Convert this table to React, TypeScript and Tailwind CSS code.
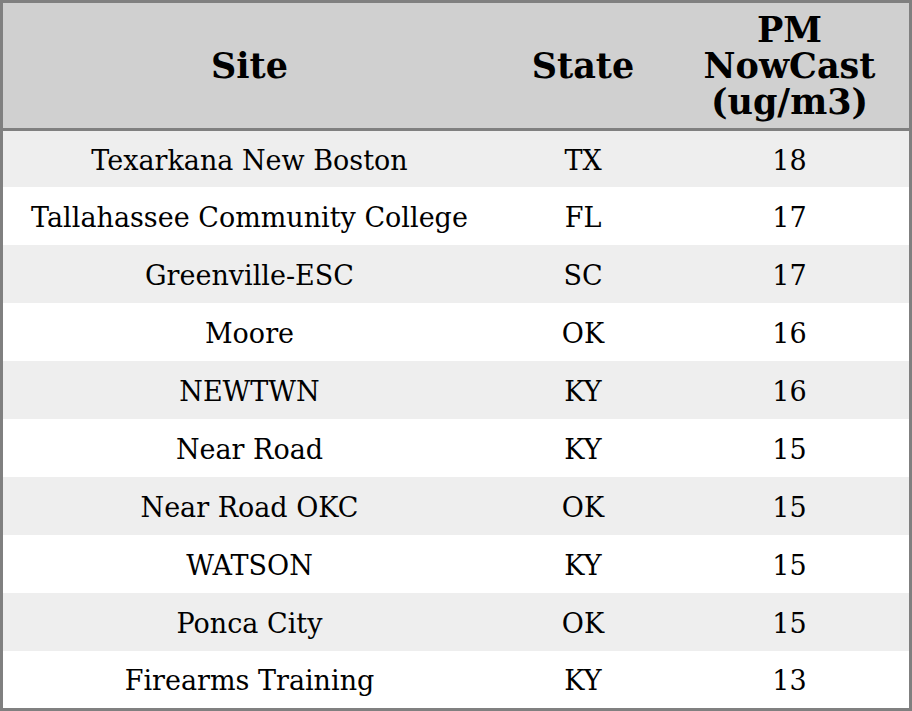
import React from "react";

const rows = [
  { site: "Texarkana New Boston", state: "TX", pm: 18 },
  { site: "Tallahassee Community College", state: "FL", pm: 17 },
  { site: "Greenville-ESC", state: "SC", pm: 17 },
  { site: "Moore", state: "OK", pm: 16 },
  { site: "NEWTWN", state: "KY", pm: 16 },
  { site: "Near Road", state: "KY", pm: 15 },
  { site: "Near Road OKC", state: "OK", pm: 15 },
  { site: "WATSON", state: "KY", pm: 15 },
  { site: "Ponca City", state: "OK", pm: 15 },
  { site: "Firearms Training", state: "KY", pm: 13 },
];

const heights = ["h-[56px]", "h-[58px]", "h-[58px]", "h-[58px]", "h-[58px]", "h-[58px]", "h-[58px]", "h-[58px]", "h-[58px]", "h-[57px]"];

export default function App() {
  return (
    <div className="w-[912px] h-[711px] bg-white font-['DejaVu_Serif',serif] text-black">
      <div className="border-[3px] border-[#808080] flex flex-col">
        <div className="grid grid-cols-[493px_174px_239px] h-[128px] bg-[#d0d0d0] border-b-[3px] border-[#808080] font-bold text-[35px] leading-[36px]">
          <div className="flex items-center justify-center">Site</div>
          <div className="flex items-center justify-center">State</div>
          <div className="flex flex-col items-center justify-center text-center">
            <span>PM</span>
            <span>NowCast</span>
            <span>(ug/m3)</span>
          </div>
        </div>
        {rows.map((r, i) => (
          <div
            key={r.site}
            className={`grid grid-cols-[493px_174px_239px] items-center pt-1 text-[27px] ${heights[i]} ${i % 2 === 0 ? "bg-[#eeeeee]" : "bg-white"}`}
          >
            <div className="text-center">{r.site}</div>
            <div className="text-center">{r.state}</div>
            <div className="text-center">{r.pm}</div>
          </div>
        ))}
      </div>
    </div>
  );
}
